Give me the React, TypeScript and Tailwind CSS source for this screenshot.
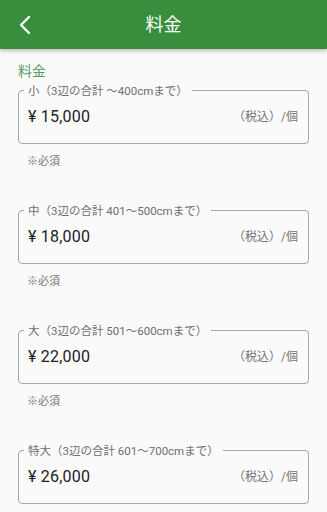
import React from "react";

const font = { fontFamily: "Roboto, 'Noto Sans CJK JP', sans-serif" };

type PriceItem = {
    label: string;
    price: string;
    required?: boolean;
};

const items: PriceItem[] = [
    { label: "小（3辺の合計 ～400cmまで）", price: "15,000", required: true },
    { label: "中（3辺の合計 401～500cmまで）", price: "18,000", required: true },
    { label: "大（3辺の合計 501～600cmまで）", price: "22,000", required: true },
    { label: "特大（3辺の合計 601～700cmまで）", price: "26,000" },
];

const PriceField: React.FC<{ item: PriceItem }> = ({ item }) => (
    <div className="flex flex-col">
        <div className="relative h-[54px] rounded-[4px] border border-[#a8a8a8] flex items-center justify-between pl-[9px] pr-[10px]">
            <span className="absolute left-[5px] -top-[8px] px-[4px] bg-[#fafafa] text-[11.5px] leading-[16px] text-[#6e6e6e]">
                {item.label}
            </span>
            <span className="text-[16px] text-[#212121] tracking-[0.2px]">¥ {item.price}</span>
            <span className="text-[12px] text-[#757575]">（税込）/個</span>
        </div>
        {item.required && (
            <div className="mt-[10px] pl-[9px] h-[16px] text-[11px] leading-[16px] text-[#757575]">※必須</div>
        )}
    </div>
);

export default function App() {
    return (
        <div className="w-[327px] h-[512px] bg-[#fafafa] overflow-hidden" style={font}>
            <div className="relative z-10 h-[49px] bg-[#388e3c] shadow-[0_2px_4px_rgba(0,0,0,0.25)] flex items-center justify-center">
                <button className="absolute left-[14px] top-[11px] w-[22px] h-[28px] flex items-center justify-center">
                    <svg width="14" height="20" viewBox="0 0 14 20" fill="none">
                        <path d="M11 2 L3 10 L11 18" stroke="white" strokeWidth="2.4" strokeLinecap="round" strokeLinejoin="round" />
                    </svg>
                </button>
                <h1 className="text-[18px] text-white leading-[24px]">料金</h1>
            </div>

            <div className="px-[18px]">
                <div className="mt-[12px] text-[14px] leading-[20px] text-[#5f9a63]">料金</div>
                <div className="mt-[9px] flex flex-col gap-[40px]">
                    {items.map((item) => (
                        <PriceField key={item.label} item={item} />
                    ))}
                </div>
            </div>
        </div>
    );
}
